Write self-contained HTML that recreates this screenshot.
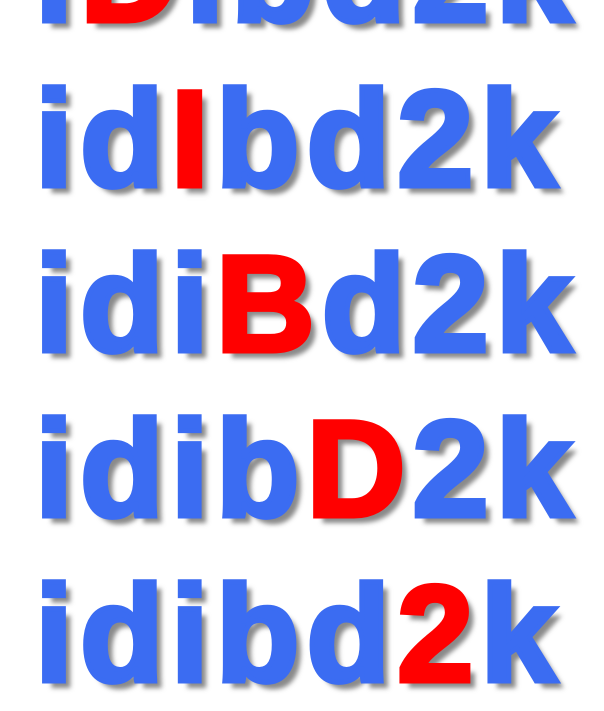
<!DOCTYPE html>
<html><head><style>
html,body{margin:0;padding:0;width:604px;height:604px;overflow:hidden;background:#fff}
.l{position:absolute;left:35px;font-family:"Liberation Sans",Arial,sans-serif;font-weight:bold;font-size:137px;line-height:137px;letter-spacing:7px;color:#3b6cf2;-webkit-text-stroke:5px #3b6cf2;text-shadow:7px 7px 5px rgba(60,60,60,.6);white-space:nowrap}
.r{color:#ff0000;-webkit-text-stroke:5px #ff0000}
</style></head><body>
<div class="l" style="top:-94px">i<span class="r">D</span>ibd2k</div>
<div class="l" style="top:71px">id<span class="r">I</span>bd2k</div>
<div class="l" style="top:236px">idi<span class="r">B</span>d2k</div>
<div class="l" style="top:401px">idib<span class="r">D</span>2k</div>
<div class="l" style="top:566px">idibd<span class="r">2</span>k</div>
</body></html>
